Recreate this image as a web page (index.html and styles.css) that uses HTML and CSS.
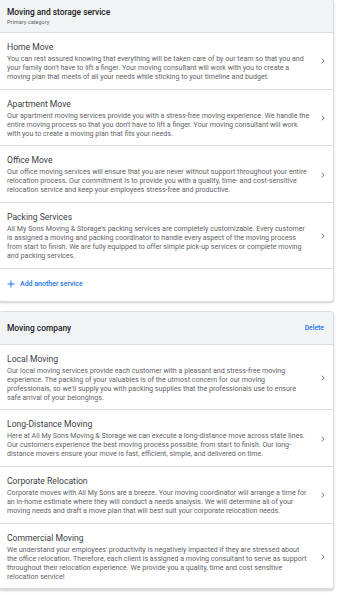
FILE: index.html
```html
<!DOCTYPE html>
<html>
<head>
<meta charset="utf-8">
<link rel="stylesheet" href="styles.css">
</head>
<body>
<div class="page">
  <section class="card">
    <header class="card-head">
      <div>
        <h2 class="head-title">Moving and storage service</h2>
        <p class="head-sub">Primary category</p>
      </div>
    </header>
    <ul class="items">
      <li class="item">
        <div class="item-body">
          <h3 class="item-title">Home Move</h3>
          <p class="item-desc">You can rest assured knowing that everything will be taken care of by our team so that you and your family don't have to lift a finger. Your moving consultant will work with you to create a moving plan that meets of all your needs while sticking to your timeline and budget.</p>
        </div>
        <svg class="chev" viewBox="0 0 4 6" width="4" height="6"><path d="M0.8 0.6 L3.2 3 L0.8 5.4" fill="none" stroke="#5f6368" stroke-width="0.9"/></svg>
      </li>
      <li class="item">
        <div class="item-body">
          <h3 class="item-title">Apartment Move</h3>
          <p class="item-desc">Our apartment moving services provide you with a stress-free moving experience. We handle the entire moving process so that you don't have to lift a finger. Your moving consultant will work with you to create a moving plan that fits your needs.</p>
        </div>
        <svg class="chev" viewBox="0 0 4 6" width="4" height="6"><path d="M0.8 0.6 L3.2 3 L0.8 5.4" fill="none" stroke="#5f6368" stroke-width="0.9"/></svg>
      </li>
      <li class="item">
        <div class="item-body">
          <h3 class="item-title">Office Move</h3>
          <p class="item-desc">Our office moving services will ensure that you are never without support throughout your entire relocation process. Our commitment is to provide you with a quality, time- and cost-sensitive relocation service and keep your employees stress-free and productive.</p>
        </div>
        <svg class="chev" viewBox="0 0 4 6" width="4" height="6"><path d="M0.8 0.6 L3.2 3 L0.8 5.4" fill="none" stroke="#5f6368" stroke-width="0.9"/></svg>
      </li>
      <li class="item">
        <div class="item-body">
          <h3 class="item-title">Packing Services</h3>
          <p class="item-desc">All My Sons Moving &amp; Storage's packing services are completely customizable. Every customer is assigned a moving and packing coordinator to handle every aspect of the moving process from start to finish. We are fully equipped to offer simple pick-up services or complete moving and packing services.</p>
        </div>
        <svg class="chev" viewBox="0 0 4 6" width="4" height="6"><path d="M0.8 0.6 L3.2 3 L0.8 5.4" fill="none" stroke="#5f6368" stroke-width="0.9"/></svg>
      </li>
    </ul>
    <div class="add">
      <svg class="plus" viewBox="0 0 8 8" width="8" height="8"><path d="M4 0.5 V7.5 M0.5 4 H7.5" stroke="#1a73e8" stroke-width="1"/></svg>
      <span>Add another service</span>
    </div>
  </section>

  <section class="card">
    <header class="card-head single">
      <h2 class="head-title">Moving company</h2>
      <span class="delete">Delete</span>
    </header>
    <ul class="items">
      <li class="item">
        <div class="item-body">
          <h3 class="item-title">Local Moving</h3>
          <p class="item-desc">Our local moving services provide each customer with a pleasant and stress-free moving experience. The packing of your valuables is of the utmost concern for our moving professionals, so we'll supply you with packing supplies that the professionals use to ensure safe arrival of your belongings.</p>
        </div>
        <svg class="chev" viewBox="0 0 4 6" width="4" height="6"><path d="M0.8 0.6 L3.2 3 L0.8 5.4" fill="none" stroke="#5f6368" stroke-width="0.9"/></svg>
      </li>
      <li class="item">
        <div class="item-body">
          <h3 class="item-title">Long-Distance Moving</h3>
          <p class="item-desc">Here at All My Sons Moving &amp; Storage we can execute a long-distance move across state lines. Our customers experience the best moving process possible, from start to finish. Our long-distance movers ensure your move is fast, efficient, simple, and delivered on time.</p>
        </div>
        <svg class="chev" viewBox="0 0 4 6" width="4" height="6"><path d="M0.8 0.6 L3.2 3 L0.8 5.4" fill="none" stroke="#5f6368" stroke-width="0.9"/></svg>
      </li>
      <li class="item">
        <div class="item-body">
          <h3 class="item-title">Corporate Relocation</h3>
          <p class="item-desc">Corporate moves with All My Sons are a breeze. Your moving coordinator will arrange a time for an in-home estimate where they will conduct a needs analysis. We will determine all of your moving needs and draft a move plan that will best suit your corporate relocation needs.</p>
        </div>
        <svg class="chev" viewBox="0 0 4 6" width="4" height="6"><path d="M0.8 0.6 L3.2 3 L0.8 5.4" fill="none" stroke="#5f6368" stroke-width="0.9"/></svg>
      </li>
      <li class="item">
        <div class="item-body">
          <h3 class="item-title">Commercial Moving</h3>
          <p class="item-desc">We understand your employees' productivity is negatively impacted if they are stressed about the office relocation. Therefore, each client is assigned a moving consultant to serve as support throughout their relocation experience. We provide you a quality, time and cost sensitive relocation service!</p>
        </div>
        <svg class="chev" viewBox="0 0 4 6" width="4" height="6"><path d="M0.8 0.6 L3.2 3 L0.8 5.4" fill="none" stroke="#5f6368" stroke-width="0.9"/></svg>
      </li>
    </ul>
  </section>
</div>
</body>
</html>
```

FILE: styles.css
```css
* { box-sizing: border-box; }
html, body { margin: 0; padding: 0; background: #fff; }
body {
  font-family: Roboto, "Noto Sans", Arial, sans-serif;
  color: #3c4043;
  overflow: hidden;
}
.page {
  width: 338px;
  padding: 0 4px 0 0;
  margin-top: -1px;
}
.card {
  margin-left: -2px;
  background: #fff;
  border: 1px solid #dadce0;
  border-radius: 4px;
  box-shadow: 0 1px 2px rgba(60,64,67,0.25);
  overflow: hidden;
  margin-bottom: 9px;
}
.card-head {
  background: #f1f3f4;
  border-bottom: 1px solid #dadce0;
  height: 33px;
  padding: 6px 8px 0 8px;
}
.card-head.single {
  display: flex;
  align-items: center;
  justify-content: space-between;
  padding: 0 9px 0 8px;
}
.head-title {
  margin: 0;
  font-size: 8.4px;
  line-height: 12px;
  font-weight: 500;
  color: #202124;
}
.head-sub {
  margin: 0;
  font-size: 5.6px;
  line-height: 8px;
  color: #5f6368;
}
.delete {
  font-size: 6.8px;
  font-weight: 500;
  color: #1a73e8;
}
.items {
  list-style: none;
  margin: 0;
  padding: 0;
}
.item {
  display: flex;
  align-items: center;
  border-bottom: 1px solid #dadce0;
  padding: 8px 0 7px 8px;
}
.item-body {
  width: 303px;
}
.item-title {
  margin: 0 0 2px 0;
  font-size: 8.6px;
  line-height: 12px;
  font-weight: 400;
  color: #3c4043;
}
.item-desc {
  margin: 0;
  font-size: 7.1px;
  line-height: 8.9px;
  color: #5f6368;
}
.chev {
  margin-left: 11px;
  flex: none;
}
.add {
  display: flex;
  align-items: center;
  gap: 5px;
  height: 32px;
  padding: 0 0 1px 8px;
  color: #1a73e8;
  font-size: 7px;
  font-weight: 500;
}
.plus { flex: none; }
```
